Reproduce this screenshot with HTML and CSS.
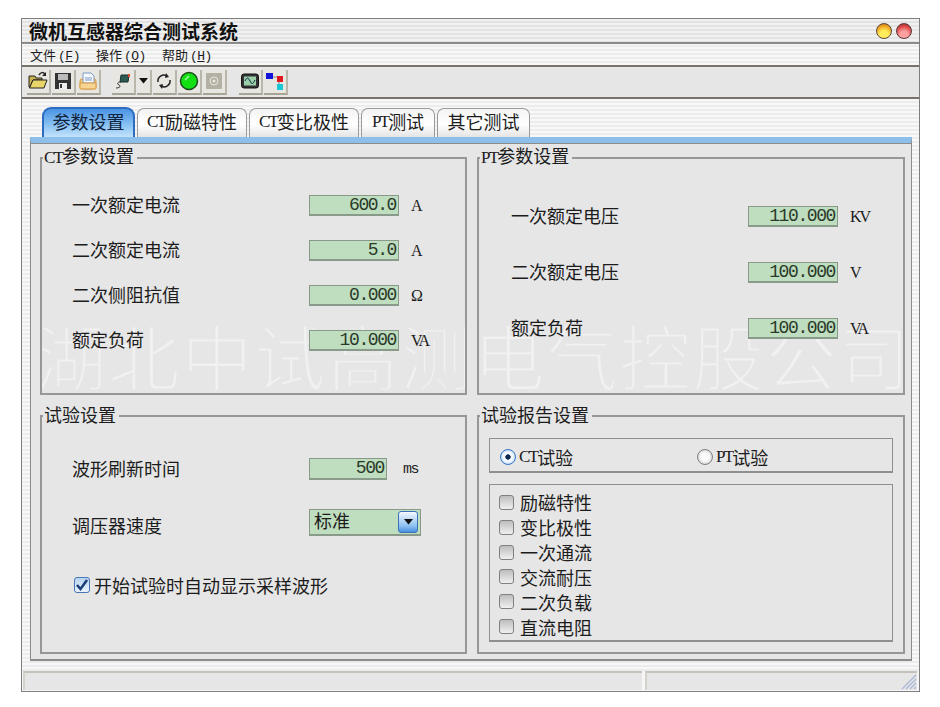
FILE: index.html
```html
<!DOCTYPE html>
<html lang="zh-CN">
<head>
<meta charset="utf-8">
<title>微机互感器综合测试系统</title>
<link rel="stylesheet" href="styles.css">
</head>
<body>
<div class="window">
  <header class="titlebar">
    <h1 class="title">微机互感器综合测试系统</h1>
    <div class="winbtns"><span class="orb orb-y"></span><span class="orb orb-r"></span></div>
  </header>
  <nav class="menubar">
    <span class="menu">文件<span class="lat">(<u>F</u>)</span></span>
    <span class="menu">操作<span class="lat">(<u>O</u>)</span></span>
    <span class="menu">帮助<span class="lat">(<u>H</u>)</span></span>
  </nav>
  <div class="toolbar">
    <span class="tb"><svg viewBox="0 0 20 20" width="20" height="20"><path d="M1 5h6l1 2h6v2H5L2 16H1z" fill="#c8b050" stroke="#222"/><path d="M5 9h14l-3 8H1.500z" fill="#e8d468" stroke="#222"/><path d="M11 4c2-3 4-3 6-1" fill="none" stroke="#222" stroke-width="1.500"/><path d="M18 1v4h-4z" fill="#222"/></svg></span>
    <span class="tb"><svg viewBox="0 0 20 20" width="20" height="20"><path d="M2 2h16v16H2z" fill="#333"/><path d="M5 3h10v6H5z" fill="#bbb"/><path d="M6 12h8v6H6z" fill="#eee"/><path d="M7 13h2v4H7z" fill="#333"/></svg></span>
    <span class="tb"><svg viewBox="0 0 20 20" width="20" height="20"><rect x="2" y="8" width="16" height="10" rx="2" fill="#f5c77a" stroke="#d79a40"/><path d="M5 2h8l3 3v7H5z" fill="#f4f8ff" stroke="#7f9ac4"/><path d="M7 7h7M7 9h7" stroke="#7f9ac4"/><rect x="2" y="12" width="16" height="6" rx="1" fill="#f8d594" stroke="#d79a40"/></svg></span>
    <span class="tb-gap"></span>
    <span class="tb"><svg viewBox="0 0 20 20" width="20" height="20"><path d="M8 4l8 0-1 7-8 0z" fill="#2d5a50" stroke="#16302a"/><path d="M15 3h2v3h-2z" fill="#d84a2c"/><path d="M8 11c-4 0-4 2-2 3s1 3-3 3" fill="none" stroke="#333"/></svg></span>
    <span class="tb tb-arrow"><svg viewBox="0 0 9 6" width="9" height="6"><path d="M0 0h9L4.500 5.500z" fill="#111"/></svg></span>
    <span class="tb"><svg viewBox="0 0 20 20" width="20" height="20"><path d="M4 11a6 6 0 0 1 9-6" fill="none" stroke="#222" stroke-width="1.500"/><path d="M12 2l3 4-4 1z" fill="#222"/><path d="M16 9a6 6 0 0 1-9 6" fill="none" stroke="#222" stroke-width="1.500"/><path d="M8 18l-3-4 4-1z" fill="#222"/></svg></span>
    <span class="tb"><svg viewBox="0 0 20 20" width="20" height="20"><circle cx="10" cy="10" r="8.500" fill="#13e013" stroke="#1d4d1d" stroke-width="1.500"/><path d="M6 9l4-4" stroke="#a8f5a8" stroke-width="1.500"/></svg></span>
    <span class="tb"><svg viewBox="0 0 20 20" width="20" height="20"><rect x="2" y="2" width="16" height="16" rx="1" fill="#b5b0a4"/><circle cx="10" cy="10" r="4" fill="none" stroke="#e8e6e0"/><circle cx="10" cy="10" r="1.500" fill="#e8e6e0"/></svg></span>
    <span class="tb-gap tb-gap-wide"></span>
    <span class="tb"><svg viewBox="0 0 20 20" width="20" height="20"><rect x="1.500" y="3" width="17" height="14" rx="2.500" fill="#333" stroke="#111"/><rect x="4" y="5.500" width="12" height="9" fill="#9ad0a8"/><path d="M5 10c2-4 3-4 5 0s3 3 5-1" fill="none" stroke="#124" /></svg></span>
    <span class="tb"><svg viewBox="0 0 20 20" width="20" height="20"><path d="M7 6h7v6" fill="none" stroke="#888"/><path d="M14 12v3" stroke="#888"/><rect x="1" y="2" width="7" height="6" fill="#1414d8"/><rect x="12" y="5" width="6" height="6" fill="#e01820"/><rect x="12" y="13" width="6" height="6" fill="#18c8d8"/></svg></span>
  </div>
  <div class="tabstrip">
    <span class="tab tab-on">参数设置</span>
    <span class="tab tab-2"><span class="lat">CT</span>励磁特性</span>
    <span class="tab tab-3"><span class="lat">CT</span>变比极性</span>
    <span class="tab tab-4"><span class="lat">PT</span>测试</span>
    <span class="tab tab-5">其它测试</span>
  </div>
  <main class="panel">
    <div class="watermark">湖北中试高测电气控股公司</div>
    <fieldset class="grp">
      <legend class="leg"><span class="lat">CT</span>参数设置</legend>
      <div class="rows rows-ct">
        <div class="row"><span class="lbl">一次额定电流</span><span class="num">600.0</span><span class="unit">A</span></div>
        <div class="row"><span class="lbl">二次额定电流</span><span class="num">5.0</span><span class="unit">A</span></div>
        <div class="row"><span class="lbl">二次侧阻抗值</span><span class="num">0.000</span><span class="unit">Ω</span></div>
        <div class="row"><span class="lbl">额定负荷</span><span class="num">10.000</span><span class="unit">VA</span></div>
      </div>
    </fieldset>
    <fieldset class="grp">
      <legend class="leg"><span class="lat">PT</span>参数设置</legend>
      <div class="rows rows-pt">
        <div class="row"><span class="lbl">一次额定电压</span><span class="num">110.000</span><span class="unit">KV</span></div>
        <div class="row"><span class="lbl">二次额定电压</span><span class="num">100.000</span><span class="unit">V</span></div>
        <div class="row"><span class="lbl">额定负荷</span><span class="num">100.000</span><span class="unit">VA</span></div>
      </div>
    </fieldset>
    <fieldset class="grp">
      <legend class="leg">试验设置</legend>
      <div class="rows rows-test">
        <div class="row row-tall"><span class="lbl">波形刷新时间</span><span class="num num-short">500</span><span class="unit unit-ms">ms</span></div>
        <div class="row row-combo"><span class="lbl lbl-low">调压器速度</span><span class="combo">标准<span class="drop"><svg viewBox="0 0 9 6" width="9" height="6"><path d="M0 0h9L4.500 5.500z" fill="#111"/></svg></span></span></div>
        <label class="autochk"><span class="chk chk-on"><svg viewBox="0 0 16 16" width="16" height="16"><path d="M3 8l3.500 4L13 3" fill="none" stroke="#1c3f7a" stroke-width="2.600"/></svg></span>开始试验时自动显示采样波形</label>
      </div>
    </fieldset>
    <fieldset class="grp">
      <legend class="leg">试验报告设置</legend>
      <div class="report">
        <div class="radios">
          <span class="radio-item radio-ct"><span class="radio radio-on"></span><span class="lat">CT</span>试验</span>
          <span class="radio-item"><span class="radio"></span><span class="lat">PT</span>试验</span>
        </div>
        <div class="checks">
          <div class="chkrow"><span class="chk"></span>励磁特性</div>
          <div class="chkrow"><span class="chk"></span>变比极性</div>
          <div class="chkrow"><span class="chk"></span>一次通流</div>
          <div class="chkrow"><span class="chk"></span>交流耐压</div>
          <div class="chkrow"><span class="chk"></span>二次负载</div>
          <div class="chkrow"><span class="chk"></span>直流电阻</div>
        </div>
      </div>
    </fieldset>
  </main>
  <footer class="status">
    <span class="pane pane-a"></span>
    <span class="pane pane-b"><svg class="grip" viewBox="0 0 16 16" width="16" height="16"><path d="M1 15L15 1M5 15L15 5M9 15l6-6M13 15l2-2" stroke="#a9b6d8" stroke-width="1.200"/></svg></span>
  </footer>
</div>
</body>
</html>
```
FILE: styles.css
```css
* { box-sizing: border-box; }
html, body { margin: 0; padding: 0; background: #fff; }
body {
  width: 940px;
  height: 707px;
  padding: 18px 0 0 21px;
  font-family: "Noto Sans CJK SC", "Liberation Serif", serif;
  color: #1c1c1c;
}
.lat {
  font-family: "Liberation Serif", serif;
  font-size: 17px;
  line-height: 1;
  letter-spacing: -1.800px;
}
.window {
  width: 899px;
  height: 674px;
  border: 1px solid #7f7f7f;
  border-bottom-width: 2px;
  display: flex;
  flex-direction: column;
  background: repeating-linear-gradient(#f8f8f8 0 2px, #ececec 2px 4px);
}
.titlebar {
  height: 25px;
  flex: none;
  display: flex;
  align-items: center;
  justify-content: space-between;
  padding: 0 7px;
  border-bottom: 2px solid #8b8b8b;
  background: repeating-linear-gradient(#f1f1f1 0 2px, #e3e3e3 2px 4px);
}
.title {
  margin: 0;
  font-size: 19px;
  line-height: 24px;
  font-weight: 700;
  color: #111;
}
.winbtns { display: flex; gap: 4px; margin-top: 1px; }
.orb { width: 16px; height: 16px; border-radius: 50%; border: 1px solid #5a4a38; }
.orb-y { background: radial-gradient(circle at 50% 80%, #ffec5a 0 35%, #f0a020 70%, #a86a20 100%); }
.orb-r { background: radial-gradient(circle at 50% 80%, #ffa0a0 0 30%, #d84040 70%, #803030 100%); border-color: #5a3838; }
.menubar {
  height: 23px;
  flex: none;
  display: flex;
  align-items: center;
  gap: 16px;
  padding-left: 8px;
  border-bottom: 2px solid #77736a;
  font-size: 13px;
}
.menu .lat {
  font-family: "Liberation Mono", monospace;
  font-size: 13px;
  letter-spacing: -0.500px;
  margin-left: 2px;
}
.toolbar {
  height: 32px;
  flex: none;
  display: flex;
  align-items: center;
  padding: 0 0 0 5px;
  background: #e6e6e6;
  border-bottom: 2px solid #77736a;
}
.tb {
  width: 24px;
  height: 25px;
  margin-right: 1px;
  display: flex;
  align-items: center;
  justify-content: center;
  background: #e7e6e1;
  border-right: 2px solid #b9b6aa;
  border-bottom: 2px solid #a8a597;
}
.tb-arrow { width: 15px; }
.tb-gap { width: 10px; flex: none; }
.tb-gap-wide { width: 11px; }
.tabstrip {
  height: 38px;
  flex: none;
  display: flex;
  align-items: flex-end;
  padding-left: 20px;
}
.tab {
  height: 29px;
  display: flex;
  align-items: center;
  justify-content: center;
  margin-left: 2px;
  padding-bottom: 4px;
  font-size: 18px;
  border: 1px solid #9a9a9a;
  border-bottom: 0;
  border-radius: 7px 7px 0 0;
  background: linear-gradient(#f4f4f4, #fff 55%, #e4e4e4);
}
.tab-on {
  width: 93px;
  height: 30px;
  margin-left: 0;
  border: 2px solid #2d6cc0;
  border-bottom: 0;
  border-radius: 9px 9px 0 0;
  background: linear-gradient(#4a94e4, #8cc4f4 60%, #c4e2fb);
  color: #10233c;
}
.tab-2, .tab-3 { width: 110px; }
.tab-4 { width: 74px; }
.tab-5 { width: 93px; }
.panel {
  position: relative;
  width: 882px;
  height: 524px;
  margin-left: 8px;
  flex: none;
  display: grid;
  grid-template-columns: 427px 428px;
  grid-template-rows: 250px 250px;
  column-gap: 10px;
  row-gap: 9px;
  padding: 2px 0 0 9px;
  background: #e6e6e6;
  border: 1px solid #8c8c8c;
  border-top: 6px solid #8cc0ea;
  border-bottom-width: 2px;
  box-shadow: inset 0 1px 0 #8c8c8c;
}
.grp {
  position: relative;
  z-index: 1;
  margin: 0;
  min-width: 0;
  padding: 0;
  border: 2px solid #979797;
}
.leg {
  margin-left: 1px;
  padding: 0 3px 4px 1px;
  font-size: 18px;
  line-height: 20px;
}
.rows { display: flex; flex-direction: column; }
.rows-ct { padding: 25px 0 0 30px; gap: 24px; }
.rows-pt { padding: 36px 0 0 32px; gap: 35px; }
.rows-test { padding: 30px 0 0 30px; }
.row { display: flex; align-items: center; height: 21px; }
.row-tall { height: 22px; }
.row-tall .num { height: 22px; }
.lbl { width: 237px; flex: none; padding-bottom: 2px; font-size: 18px; line-height: 21px; }
.num {
  width: 90px;
  height: 21px;
  padding-right: 2px;
  text-align: right;
  background: #bfddbf;
  border: 1px solid #8a9a8a;
  border-bottom-width: 2px;
  font-family: "Liberation Mono", monospace;
  font-size: 18px;
  line-height: 18px;
  letter-spacing: -1.400px;
  color: #2a3a2a;
}
.num-short { width: 78px; }
.unit {
  margin-left: 12px;
  font-family: "Liberation Serif", serif;
  font-size: 16px;
  line-height: 21px;
  letter-spacing: -2px;
}
.unit-ms {
  margin-left: 16px;
  font-family: "Liberation Mono", monospace;
  font-size: 15px;
  letter-spacing: -1.600px;
}
.row-combo { height: 27px; margin-top: 29px; }
.lbl-low { position: relative; top: 4px; }
.combo {
  width: 112px;
  height: 27px;
  display: flex;
  align-items: center;
  justify-content: space-between;
  padding: 0 2px 4px 4px;
  background: #bfddbf;
  border: 1px solid #8a9a8a;
  border-bottom-width: 2px;
  font-size: 18px;
}
.drop {
  width: 20px;
  height: 22px;
  margin-bottom: -4px;
  display: flex;
  align-items: center;
  justify-content: center;
  border-radius: 3px;
  border: 1px solid #3a70b8;
  background: linear-gradient(#f4f8ff, #8cc0f0 70%, #4a90e0);
}
.autochk {
  display: flex;
  align-items: center;
  margin: 37px 0 0 2px;
  font-size: 18px;
  line-height: 24px;
}
.chk {
  width: 15px;
  height: 15px;
  flex: none;
  margin-right: 6px;
  border: 1px solid #808080;
  border-radius: 3px;
  background: linear-gradient(#bdbdbd, #f0f0f0);
}
.chk-on {
  width: 16px;
  height: 16px;
  margin-right: 4px;
  display: flex;
  border-color: #4a76b8;
  background: linear-gradient(#b8d4f0, #eaf3fc);
}
.chk-on svg { margin: -1px; }
.report { padding: 10px 10px 0 10px; }
.radios {
  height: 35px;
  display: flex;
  align-items: center;
  border: 1px solid #8f8f8f;
  border-bottom-width: 2px;
  padding: 3px 0 0 10px;
  font-size: 18px;
}
.radio-item { display: flex; align-items: center; }
.radio-ct { width: 197px; }
.radio {
  width: 16px;
  height: 16px;
  margin-right: 3px;
  border-radius: 50%;
  border: 1px solid #808080;
  background: radial-gradient(circle, #fafafa 0 40%, #bcbcbc 100%);
}
.radio-on {
  border-color: #3a78c8;
  background: radial-gradient(circle, #102a50 0 24%, #f4f8ff 30% 50%, #7ab0ea 100%);
}
.checks {
  height: 158px;
  margin-top: 11px;
  padding: 5px 0 0 9px;
  border: 1px solid #8f8f8f;
  border-bottom-width: 2px;
  font-size: 18px;
}
.chkrow { display: flex; align-items: center; height: 24.850px; }
.watermark {
  position: absolute;
  z-index: 0;
  left: 4px;
  top: 171px;
  width: 872px;
  white-space: nowrap;
  font-size: 72px;
  line-height: 80px;
  letter-spacing: 1px;
  color: rgba(255, 255, 255, 0.45);
  -webkit-text-stroke: 2.800px #e6e6e6;
  pointer-events: none;
}
.status {
  height: 20px;
  margin-top: 10px;
  flex: none;
  display: flex;
  gap: 3px;
  padding: 0 1px 0 1px;
  background: #f6f6f6;
}
.pane {
  display: block;
  height: 19px;
  background: #e6e6e6;
  border-top: 2px solid #c4c2ba;
  border-left: 2px solid #d4d2ca;
}
.pane-a { width: 619px; }
.pane-b { width: 272px; position: relative; }
.grip { position: absolute; right: 0; bottom: 0; }
```
